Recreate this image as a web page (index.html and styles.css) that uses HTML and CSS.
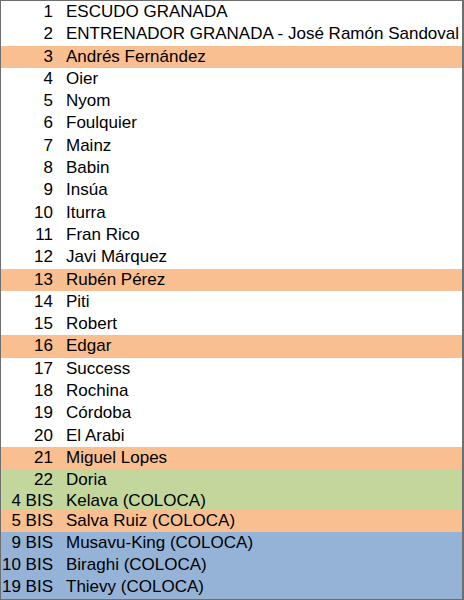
FILE: index.html
```html
<!DOCTYPE html>
<html lang="es">
<head>
<meta charset="utf-8">
<title>Granada</title>
<link rel="stylesheet" href="styles.css">
</head>
<body>
<div class="sheet">
  <div class="row"><span class="num">1</span><span class="name">ESCUDO GRANADA</span></div>
  <div class="row"><span class="num">2</span><span class="name">ENTRENADOR GRANADA - José Ramón Sandoval</span></div>
  <div class="row orange"><span class="num">3</span><span class="name">Andrés Fernández</span></div>
  <div class="row"><span class="num">4</span><span class="name">Oier</span></div>
  <div class="row"><span class="num">5</span><span class="name">Nyom</span></div>
  <div class="row"><span class="num">6</span><span class="name">Foulquier</span></div>
  <div class="row"><span class="num">7</span><span class="name">Mainz</span></div>
  <div class="row"><span class="num">8</span><span class="name">Babin</span></div>
  <div class="row"><span class="num">9</span><span class="name">Insúa</span></div>
  <div class="row"><span class="num">10</span><span class="name">Iturra</span></div>
  <div class="row"><span class="num">11</span><span class="name">Fran Rico</span></div>
  <div class="row"><span class="num">12</span><span class="name">Javi Márquez</span></div>
  <div class="row orange"><span class="num">13</span><span class="name">Rubén Pérez</span></div>
  <div class="row"><span class="num">14</span><span class="name">Piti</span></div>
  <div class="row"><span class="num">15</span><span class="name">Robert</span></div>
  <div class="row orange"><span class="num">16</span><span class="name">Edgar</span></div>
  <div class="row"><span class="num">17</span><span class="name">Success</span></div>
  <div class="row"><span class="num">18</span><span class="name">Rochina</span></div>
  <div class="row"><span class="num">19</span><span class="name">Córdoba</span></div>
  <div class="row"><span class="num">20</span><span class="name">El Arabi</span></div>
  <div class="row orange"><span class="num">21</span><span class="name">Miguel Lopes</span></div>
  <div class="row green"><span class="num">22</span><span class="name">Doria</span></div>
  <div class="row green short"><span class="num">4 BIS</span><span class="name">Kelava (COLOCA)</span></div>
  <div class="row orange"><span class="num">5 BIS</span><span class="name">Salva Ruiz (COLOCA)</span></div>
  <div class="row blue"><span class="num">9 BIS</span><span class="name">Musavu-King (COLOCA)</span></div>
  <div class="row blue"><span class="num">10 BIS</span><span class="name">Biraghi (COLOCA)</span></div>
  <div class="row blue"><span class="num">19 BIS</span><span class="name">Thievy (COLOCA)</span></div>
</div>
</body>
</html>
```

FILE: styles.css
```css
html, body {
  margin: 0;
  padding: 0;
  background: #ffffff;
}

.sheet {
  box-sizing: border-box;
  width: 464px;
  height: 600px;
  border: 1px solid #6e6e6e;
  border-right-width: 2px;
  overflow: hidden;
  display: flex;
  flex-direction: column;
  font-family: "Liberation Sans", Arial, sans-serif;
  font-size: 17px;
  color: #000000;
}

.row {
  flex: 0 0 auto;
  height: 22.3px;
  line-height: 22.3px;
  display: grid;
  grid-template-columns: 52px 1fr;
  column-gap: 13px;
  white-space: nowrap;
  overflow: hidden;
}

.row.short {
  height: 18px;
  line-height: 18px;
}

.num {
  text-align: right;
}

.name {
  overflow: hidden;
}

.orange {
  background: #f9bf90;
}

.green {
  background: #c3d69b;
}

.blue {
  background: #95b3d7;
}
```
